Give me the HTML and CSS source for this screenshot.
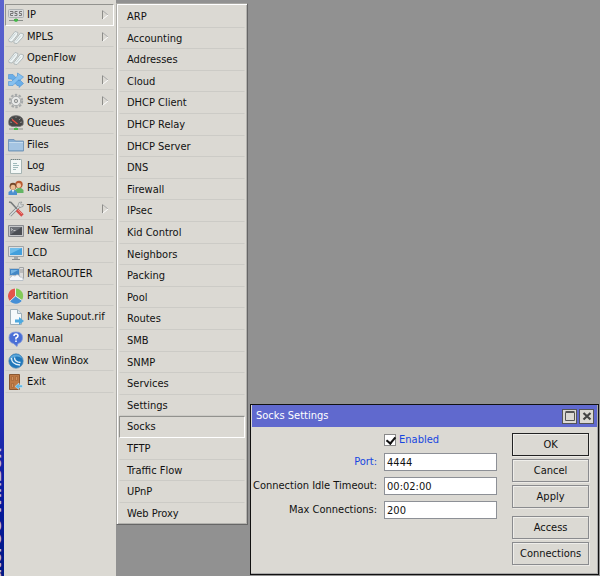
FILE: index.html
```html
<!DOCTYPE html>
<html lang="en">
<head>
<meta charset="utf-8">
<title>WinBox</title>
<link rel="stylesheet" href="styles.css">
</head>
<body>
<div class="app">
  <div class="rail"><span class="brand">RouterOS WinBox</span></div>
  <nav class="menu">
    <button class="item open"><svg class="icon" viewBox="0 0 16 16"><rect x=".5" y="2.500" width="15" height="8" rx="1" fill="#d8dadb" stroke="#aeb2b3"/><path d="M2 4.500h3v2H2.500v2H5M9.500 4.500H7v2h2v2H6.500M14 4.500h-2.500v2h2v2H11" fill="none" stroke="#777"/><path d="M1 13.500h14M8 11v2" stroke="#8b8f8b"/><path d="M6 12h4v2l-2 1-2-1z" fill="#43b649"/></svg>IP<svg class="arrow" viewBox="0 0 7 10"><path d="M.5 9.500v-9" stroke="#8d8d89"/><path d="M.5.500l5.500 4.500" stroke="#aaa"/><path d="M6 5L.5 9.500" stroke="#fff"/></svg></button>
    <button class="item"><svg class="icon" viewBox="0 0 16 16"><g fill="#eef4f4" stroke="#a3adb0" stroke-width=".8"><path d="M.8 10.500L7 2.500l3 1-.5 2.500L4 13 1 12.500z"/><path d="M6 12.500L12.500 4l3 1-.5 3-6 6.500-3-.5z"/></g><path d="M2.500 10.500l5-6M8 12.500l5-6" stroke="#c6d2d4"/></svg>MPLS<svg class="arrow" viewBox="0 0 7 10"><path d="M.5 9.500v-9" stroke="#8d8d89"/><path d="M.5.500l5.500 4.500" stroke="#aaa"/><path d="M6 5L.5 9.500" stroke="#fff"/></svg></button>
    <button class="item"><svg class="icon" viewBox="0 0 16 16"><g fill="#eef4f4" stroke="#a3adb0" stroke-width=".8"><path d="M.8 10.500L7 2.500l3 1-.5 2.500L4 13 1 12.500z"/><path d="M6 12.500L12.500 4l3 1-.5 3-6 6.500-3-.5z"/></g><path d="M2.500 10.500l5-6M8 12.500l5-6" stroke="#c6d2d4"/></svg>OpenFlow</button>
    <button class="item"><svg class="icon" viewBox="0 0 16 16"><g fill="#6aaee8" stroke="#4b91d0" stroke-width=".6"><path d="M.5 2.500h4.500l6 6.500V7l4.500 4.500-4.500 4v-2H9L3.500 7h-3z"/><path d="M.5 9.500h3L9.500 4V1l6 4-4.500 4V7.500L5 13.500H.5z" fill="#86c1f0"/></g></svg>Routing<svg class="arrow" viewBox="0 0 7 10"><path d="M.5 9.500v-9" stroke="#8d8d89"/><path d="M.5.500l5.500 4.500" stroke="#aaa"/><path d="M6 5L.5 9.500" stroke="#fff"/></svg></button>
    <button class="item"><svg class="icon" viewBox="0 0 16 16"><circle cx="8" cy="8" r="6.200" fill="none" stroke="#a5a8a9" stroke-width="2" stroke-dasharray="2.400 1.500"/><circle cx="8" cy="8" r="4.700" fill="#e8e9e8" stroke="#a5a8a9"/><circle cx="8" cy="8" r="1.700" fill="#d0d0cc" stroke="#929596"/></svg>System<svg class="arrow" viewBox="0 0 7 10"><path d="M.5 9.500v-9" stroke="#8d8d89"/><path d="M.5.500l5.500 4.500" stroke="#aaa"/><path d="M6 5L.5 9.500" stroke="#fff"/></svg></button>
    <button class="item"><svg class="icon" viewBox="0 0 16 16"><path d="M1 10Q-1 1 8 .5q9 .5 7 9.500l-3 1.500H4z" fill="#464646" stroke="#777" stroke-width=".7"/><path d="M2 7l2 .5M3.500 3.500l1.500 1M8 1.500V3M12.500 3.500L11 5M14 7l-2 .5" stroke="#aaa" stroke-width=".7"/><path d="M4 4.500L9.500 9" stroke="#ef4d42" stroke-width="1.200"/><path d="M1 14h14M8 11v3" stroke="#8d908d"/><path d="M6 13h4v2H6z" fill="#45bb49"/></svg>Queues</button>
    <button class="item"><svg class="icon" viewBox="0 0 16 16"><path d="M.5 14V2.500H6L7.500 4h8v10z" fill="#86add2" stroke="#7798b9"/><path d="M1 5.500h14V13H1z" fill="#a4c4e2"/><path d="M1 5.500h14" stroke="#c5dbed"/></svg>Files</button>
    <button class="item"><svg class="icon" viewBox="0 0 16 16"><path d="M2.500 1.500h11v14h-11z" fill="#f4f8f7" stroke="#a6b4b3"/><path d="M3 1.500h10" stroke="#77807f" stroke-dasharray="1 1"/><path d="M5 5.500h4M5 7.500h6M5 9.500h5M5 11.500h3" stroke="#9fbabb"/></svg>Log</button>
    <button class="item"><svg class="icon" viewBox="0 0 16 16"><circle cx="11" cy="4.500" r="3.700" fill="#b85b32"/><circle cx="10.700" cy="5.500" r="2.400" fill="#f3c8a4"/><path d="M7 13V10l3-2h3l2.500 2v3z" fill="#63b565"/><circle cx="5" cy="6.200" r="3.400" fill="#75492b"/><circle cx="5" cy="7.200" r="2.500" fill="#edbd92"/><path d="M.5 15v-3l3-2h3L9 12v3z" fill="#4d90d0"/><path d="M4 10l1 3 1-3" fill="#fff"/></svg>Radius</button>
    <button class="item"><svg class="icon" viewBox="0 0 16 16"><path d="M2 14.500L12 4.500" stroke="#85898a" stroke-width="3"/><path d="M2 14.500L12 4.500" stroke="#dce0e1" stroke-width="1.500"/><path d="M14 1l-3 .5-1 3L12 6.500l3-1 .5-2-2 .5-1-1z" fill="#d8dcdd" stroke="#8c9091" stroke-width=".7"/><path d="M1 1l2 .5L9 8" fill="none" stroke="#777b7c" stroke-width="1.600"/><path d="M9 9l5.500 5.500" stroke="#d64e4a" stroke-width="3.300"/><path d="M10 9l4 4" stroke="#f28a83"/></svg>Tools<svg class="arrow" viewBox="0 0 7 10"><path d="M.5 9.500v-9" stroke="#8d8d89"/><path d="M.5.500l5.500 4.500" stroke="#aaa"/><path d="M6 5L.5 9.500" stroke="#fff"/></svg></button>
    <button class="item"><svg class="icon" viewBox="0 0 16 16"><path d="M.5 2.500h15v11H.5z" fill="#c5c6c8" stroke="#898b8f"/><path d="M2 4h12v8H2z" fill="#4b4e54"/><path d="M2 4h12L2 12z" fill="#6f7278"/><path d="M3 5.500l1.500 1L3 7.500M5.500 7.500h2" fill="none" stroke="#ddd" stroke-width=".8"/></svg>New Terminal</button>
    <button class="item"><svg class="icon" viewBox="0 0 16 16"><path d="M.5 1.500h15v10H.5z" fill="#dce0e2" stroke="#a0a4a6"/><path d="M2 3h12v7H2z" fill="#429fdc"/><path d="M2 3h12L2 9z" fill="#70bdea"/><path d="M6 12h4v2H6z" fill="#a4a8aa"/><path d="M4 14.500h8" stroke="#888c8e"/></svg>LCD</button>
    <button class="item"><svg class="icon" viewBox="0 0 16 16"><path d="M11.500 1.500h4v11h-4z" fill="#ddd" stroke="#a0a2a3"/><path d="M12 4h3M12 6h3" stroke="#999"/><path d="M1.500 2.500h10v7h-10z" fill="#4387c5" stroke="#b9bfc3"/><path d="M3 4h7L3 8z" fill="#78b5e4"/><path d="M2.500 14.500q-3-2 .5-3.500 1-3 4-1 3-3 5 1 4 0 3 3.500z" fill="#f5f7fa" stroke="#aeb8c1" stroke-width=".8"/></svg>MetaROUTER</button>
    <button class="item"><svg class="icon" viewBox="0 0 16 16"><path d="M7 8V.5A7.500 7.500 0 0 0 2 13z" fill="#e4544c"/><path d="M8 8V.5A7.500 7.500 0 0 1 14 12z" fill="#82ca58"/><path d="M7.500 8L2 13a7.500 7.500 0 0 0 12-.5z" fill="#458fd6"/><path d="M7.500.5V8L2 13M7.500 8l6.500 4.500" fill="none" stroke="#edf4ee" stroke-width=".8"/></svg>Partition</button>
    <button class="item"><svg class="icon" viewBox="0 0 16 16"><path d="M2.500.5h7l4 4v11h-11z" fill="#f5f9fb" stroke="#9eafb8"/><path d="M9.500.5v4h4" fill="#d8e5ed" stroke="#9eafb8"/><path d="M7 10.500h4V8l5 4-5 4v-2.500H7z" fill="#4fa9df"/></svg>Make Supout.rif</button>
    <button class="item"><svg class="icon" viewBox="0 0 16 16"><path d="M8 1q6.500 0 6.500 5.500 0 5-4.500 6l-1 3-3.500-3Q1 11.500 1 6.500 1 1 8 1z" fill="#4a6fd6" stroke="#7c96dc" stroke-width=".8"/><path d="M6 5q0-2 2-2t2 2q0 1-2 2v1.500" fill="none" stroke="#fff" stroke-width="1.500"/><path d="M8 9.500v1.500" stroke="#fff" stroke-width="1.500"/></svg>Manual</button>
    <button class="item"><svg class="icon" viewBox="0 0 16 16"><circle cx="8" cy="8" r="7.200" fill="#2178bb" stroke="#5088b5" stroke-width=".7"/><path d="M2 5Q4 1 9 1.500q4 .5 5 4Q8 1 2 7z" fill="#5da8db"/><path d="M3.500 5q0 6.500 8.500 7M6.500 4.500q0 4.500 6 5" fill="none" stroke="#e7f3fb" stroke-width="1.300"/></svg>New WinBox</button>
    <button class="item"><svg class="icon" viewBox="0 0 16 16"><path d="M1.500.5h10v15h-10z" fill="#bd7945" stroke="#8b5932"/><path d="M3.500 2.500h2v4h-2zM7.500 2.500h2v4h-2zM3.500 9.500h2v4h-2z" fill="#cf915d" stroke="#a36435" stroke-width=".7"/><path d="M14.500 11H11V9l-4 3.500 4 3v-2h3.500z" fill="#62b6e4" stroke="#d6ecf7" stroke-width=".5"/></svg>Exit</button>
  </nav>
  <main class="desktop">
    <nav class="submenu">
      <button class="item">ARP</button>
      <button class="item">Accounting</button>
      <button class="item">Addresses</button>
      <button class="item">Cloud</button>
      <button class="item">DHCP Client</button>
      <button class="item">DHCP Relay</button>
      <button class="item">DHCP Server</button>
      <button class="item">DNS</button>
      <button class="item">Firewall</button>
      <button class="item">IPsec</button>
      <button class="item">Kid Control</button>
      <button class="item">Neighbors</button>
      <button class="item">Packing</button>
      <button class="item">Pool</button>
      <button class="item">Routes</button>
      <button class="item">SMB</button>
      <button class="item">SNMP</button>
      <button class="item">Services</button>
      <button class="item">Settings</button>
      <button class="item open">Socks</button>
      <button class="item">TFTP</button>
      <button class="item">Traffic Flow</button>
      <button class="item">UPnP</button>
      <button class="item">Web Proxy</button>
    </nav>
    <section class="window">
      <header class="titlebar">
        <h1 class="title">Socks Settings</h1>
        <button class="tool" aria-label="Maximize"><svg viewBox="0 0 10 10"><path d="M.5 1.500h9v8h-9zM.5.500h9" fill="none" stroke="#555"/></svg></button>
        <button class="tool" aria-label="Close"><svg viewBox="0 0 10 10"><path d="M1.500 2l7 6.500M8.500 2l-7 6.500" stroke="#444" stroke-width="2.200"/></svg></button>
      </header>
      <form class="content">
        <div class="fields">
          <label class="check"><input type="checkbox" checked>Enabled</label>
          <label class="label changed" for="port">Port:</label><input class="text" id="port" type="text" value="4444">
          <label class="label" for="idle">Connection Idle Timeout:</label><input class="text" id="idle" type="text" value="00:02:00">
          <label class="label" for="max">Max Connections:</label><input class="text" id="max" type="text" value="200">
        </div>
        <div class="actions">
          <button type="button" class="action default">OK</button>
          <button type="button" class="action">Cancel</button>
          <button type="button" class="action">Apply</button>
          <button type="button" class="action group">Access</button>
          <button type="button" class="action">Connections</button>
        </div>
      </form>
    </section>
  </main>
</div>
</body>
</html>
```
FILE: styles.css
```css
* { box-sizing: border-box; }
body {
  margin: 0;
  background: #919191;
  font: 11px/16px "DejaVu Sans Condensed", Tahoma, "Noto Sans", sans-serif;
  color: #111;
}
button, input { font: inherit; color: inherit; margin: 0; border-radius: 0; }
.app { display: flex; min-height: 100vh; }

.rail {
  position: relative;
  flex: none;
  width: 4px;
  overflow: hidden;
  background: linear-gradient(#5b63ce, #3944c0 45%, #2430b4 72%, #06199a 88%, #001a86);
}
.brand {
  position: absolute;
  right: 0;
  top: 448px;
  writing-mode: vertical-rl;
  transform: rotate(180deg);
  white-space: nowrap;
  font: bold 18px/18px "Liberation Sans", sans-serif;
  color: #b9bfd8;
}

.menu, .submenu {
  display: grid;
  align-content: start;
  grid-auto-rows: 22px 21px 22px 21px 22px;
  background: #dbd9d3;
}
.menu { flex: none; width: 112px; padding: 4px 2px 0 1px; }
.item {
  display: flex;
  align-items: center;
  gap: 3px;
  padding: 0 4px 0 2px;
  border: 1px solid transparent;
  border-bottom-color: #cccbc6;
  background: none;
  text-align: left;
  white-space: nowrap;
}
.item.open { border-color: #92928e #fff #fff #92928e; }
.icon { flex: none; width: 16px; height: 16px; }
.arrow { width: 7px; height: 10px; margin-left: auto; fill: none; }

.desktop { position: relative; flex: 1; }
.submenu {
  position: absolute;
  left: 0;
  top: 3px;
  width: 132px;
  padding: 2px 2px 0;
  border: 1px solid;
  border-color: #aaa9a5 #666 #666 #aaa9a5;
  box-shadow: inset 1px 1px #fff, inset -1px -1px #b3b2ae;
}
.submenu .item { padding-left: 7px; }
.submenu .item:last-child { border-bottom-color: transparent; }

.window {
  position: absolute;
  left: 134px;
  top: 404px;
  right: 1px;
  border: 1px solid #111;
  background: #dbd9d3;
  box-shadow: inset -1px -1px #aaa;
}
.titlebar {
  display: flex;
  align-items: center;
  gap: 2px;
  height: 22px;
  padding: 0 3px 0 4px;
  margin: 0 1px;
  background: #6069ce;
}
.title { flex: 1; margin: 0; font-size: 11px; line-height: 16px; font-weight: normal; color: #fff; }
.tool {
  display: grid;
  place-items: center;
  width: 15px;
  height: 15px;
  padding: 0;
  border: 1px solid #555;
  background: #dbd9d3;
}
.tool svg { width: 10px; height: 10px; }

.content { display: flex; padding: 6px 9px 9px 2px; }
.fields {
  flex: 1;
  display: grid;
  grid-template-columns: 1fr 113px;
  column-gap: 7px;
  row-gap: 6px;
  align-content: start;
}
.check {
  grid-column: 2;
  display: flex;
  align-items: center;
  gap: 3px;
  height: 14px;
  color: #1746e0;
}
.check input {
  appearance: none;
  width: 12px;
  height: 12px;
  border: 1px solid #888;
  background: #fff;
}
.check input:checked::before {
  content: "";
  display: block;
  width: 4px;
  height: 7px;
  margin: 0 3px;
  border: solid #111;
  border-width: 0 2px 2px 0;
  transform: rotate(40deg);
}
.label { text-align: right; white-space: nowrap; line-height: 18px; }
.changed { color: #1746e0; }
.text {
  width: 100%;
  height: 18px;
  padding: 0 2px;
  border: 1px solid #8d9096;
  background: #fff;
}
.actions { flex: none; display: grid; gap: 3px; width: 77px; margin-left: 15px; }
.action {
  height: 23px;
  padding: 0;
  border: 1px solid #8a8b8e;
  background: #dbd9d3;
  box-shadow: inset 1px 1px #efeeea, 1px 1px #eceae6;
}
.default { border-color: #222; }
.group { margin-top: 5px; }
```
